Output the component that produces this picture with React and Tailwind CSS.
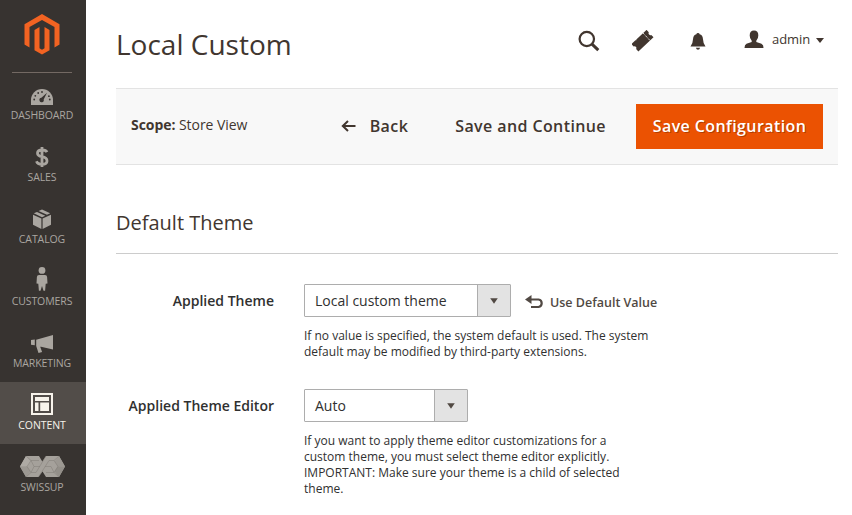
const icons = {
  dashboard: (
    <svg width="22" height="16" viewBox="0 0 22 16" fill="#aaa6a0">
      <path d="M0 16V11a11 11 0 0 1 22 0v5z" />
      <g fill="#373330">
        <circle cx="3.2" cy="10.5" r=".9" />
        <circle cx="4.3" cy="6.8" r=".9" />
        <circle cx="7.2" cy="4" r=".9" />
        <circle cx="11" cy="3" r=".9" />
        <circle cx="18.8" cy="10.5" r=".9" />
        <circle cx="17.9" cy="7.2" r=".9" />
        <path d="M16 3.8L12.7 10.4a2.2 2.2 0 1 1-2.3-1.6z" />
      </g>
    </svg>
  ),
  catalog: (
    <svg width="18" height="20" viewBox="0 0 18 20" fill="#aaa6a0">
      <path d="M0 5.8l8.4 3.7V20L0 15.8zM18 5.8l-8.4 3.7V20l8.4-4.2zM.8 4.3L4 2.9l8.3 3.8L9 8.2zM5.6 2.1L9 .5l8.2 3.8-3.2 1.5z" />
    </svg>
  ),
  customers: (
    <svg width="12" height="24" viewBox="0 0 12 24" fill="#aaa6a0">
      <circle cx="6" cy="3.4" r="3.4" />
      <path d="M3 8h6q2 0 2.1 2l.4 6.500-1.800.3-.6 7H7.500L6 19l-1.500 4.800H2.900l-.6-7-1.800-.3L.9 10Q1 8 3 8z" />
    </svg>
  ),
  marketing: (
    <svg width="22" height="18" viewBox="0 0 22 18" fill="#aaa6a0">
      <path d="M22 0v14.500L10 11.800H9.200l1.900 5.200-3.600 1L5.200 11V4.800zM0 5l3.800-.5v5.800L0 9.800z" />
    </svg>
  ),
  content: (
    <svg width="22" height="22" viewBox="0 0 22 22" fill="#f7f3eb">
      <path fillRule="evenodd" d="M0 0h22v22H0zM2 2v18h18V2z" />
      <path d="M4 4h14v4H4zM4 9.500h3.500V18H4zM9.200 9.500H18V18H9.200z" />
    </svg>
  ),
  swissup: (
    <svg width="45" height="21" viewBox="0 0 45 21">
      <path d="M6 0h13l3.300 5.500L26 0h13l6 10.500L39 21H26l-3.500-5.500L18.500 21H6L0 10.500z" fill="#a5a19b" />
      <path d="M6 0l4.500 5.500L7.500 10.500H0z" fill="#aeaaa4" />
      <path d="M7.500 10.500l3 5L6 21l-6-10.500z" fill="#9c9892" />
      <path d="M39 0l-4.500 5.500 3 5H45z" fill="#9c9892" />
      <path d="M34.500 15.500l3-5H45L39 21z" fill="#938f89" />
      <path d="M6 0l5 4.500h8M6 21l5-4.500h5M11 4.500l-4 6 4 6M14 10.500h6M14 10.500l-3-6M14 10.500l-3 6M39 0l-5 4.500h-5M39 21l-5-4.500h-8M34 4.500l4 6-4 6M31 10.500h-6M31 10.500l3 6M26 0L16 16.500M29 4.500L18.500 21" fill="none" stroke="#817d77" strokeWidth=".5" />
    </svg>
  ),
};

function MenuItem({ icon, label, active }) {
  return (
    <div className={`flex h-[62px] flex-col items-center pr-[2px] ${active ? "bg-[#524d49] text-[#f7f3eb]" : "text-[#aaa6a0]"}`}>
      <div className="flex h-[36px] items-end justify-center">{icon}</div>
      <div className="whitespace-nowrap text-[10.5px] leading-[15px] tracking-[-0.1px]">{label}</div>
    </div>
  );
}

function Select({ value, className }) {
  return (
    <div className={`flex h-[33px] rounded-[1px] border border-[#adadad] bg-white text-[14px] text-[#303030] ${className}`}>
      <div className="flex-1 whitespace-nowrap pl-[10px] leading-[31px]">{value}</div>
      <div className="flex w-[33px] items-center justify-center border-l border-[#adadad] bg-[#e3e3e3]">
        <svg width="8" height="6" viewBox="0 0 8 6"><path d="M.2.300h7.600L4 5.800z" fill="#514943" /></svg>
      </div>
    </div>
  );
}

export default function App() {
  return (
    <div className="flex h-[515px] w-[852px] overflow-hidden bg-white font-['Open_Sans',sans-serif] text-[#41362f]">
      <nav className="w-[86px] shrink-0 bg-[#373330]">
        <div className="mr-[14px] ml-[12px] flex h-[73px] justify-center border-b border-[#736963] pt-[14px]">
          <svg width="36" height="41" viewBox="0 0 36 41" fill="#f26322">
            <path d="M18 0l17.500 10.200v20.300l-5 2.900V13.100L18 5.900 5.500 13.100v20.300l-5-2.900V10.200z" />
            <path d="M15.500 13v21.300l2.500 1.500 2.500-1.500V13l5 2.900v20.400L18 40.600l-7.500-4.300V15.900z" />
          </svg>
        </div>
        <div className="-mt-px">
          <MenuItem icon={<span className="mb-[3px] flex">{icons.dashboard}</span>} label="DASHBOARD" />
          <MenuItem icon={<svg width="14" height="22" viewBox="0 0 14 22" className="mb-[2px]"><path d="M12 6.200Q11 4 7 4 2.500 4 2.500 7t4.500 3.700q5 .8 5 4.200 0 3.300-5 3.300-4.500 0-5.500-3M7 1v20" fill="none" stroke="#aaa6a0" strokeWidth="2.800" /></svg>} label="SALES" />
          <MenuItem icon={<span className="mb-[3px] flex">{icons.catalog}</span>} label="CATALOG" />
          <MenuItem icon={<span className="mb-[3px] flex">{icons.customers}</span>} label="CUSTOMERS" />
          <MenuItem icon={<span className="mb-[3px] flex">{icons.marketing}</span>} label="MARKETING" />
          <MenuItem icon={<span className="mb-[3px] flex">{icons.content}</span>} label="CONTENT" active />
          <MenuItem icon={<span className="mb-[3px] flex">{icons.swissup}</span>} label="SWISSUP" />
        </div>
      </nav>

      <main className="ml-[30px] w-[722px]">
        <header className="flex h-[88px] justify-between">
          <h1 className="pt-[24px] text-[28px] leading-[40px]">Local Custom</h1>
          <div className="flex pt-[30px] pr-[14px]">
            <svg width="22" height="22" viewBox="0 0 22 22" fill="none" stroke="#41362f">
              <circle cx="8.800" cy="9" r="7.200" strokeWidth="2.200" />
              <path d="M14 14.200l6.300 6" strokeWidth="3" />
            </svg>
            <svg width="22" height="22" viewBox="0 0 22 22" className="ml-[32px]" fill="#41362f">
              <g transform="rotate(-43 10.500 10.500)">
                <path d="M0 5.500h5.500l.6.700.6-.7h14v3.300a1.900 1.900 0 0 0 0 3.600v3.300H0v-3.300a1.900 1.900 0 0 0 0-3.600z" />
                <path d="M16 5.500v10.500" stroke="#fff" strokeWidth=".8" strokeDasharray="1.300 .7" />
              </g>
            </svg>
            <svg width="16" height="18" viewBox="0 0 16 18" className="mt-[2px] ml-[36px]" fill="#41362f">
              <path d="M8 1q1.500 0 1.600 1.300Q12.700 3 13 7.200q.2 4.800 2.500 7.300H.5Q2.800 12 3 7.200 3.300 3 6.400 2.300 6.500 1 8 1zM5.900 15.800h4.200q-.5 2-2.100 2t-2.100-2z" />
            </svg>
            <svg width="20" height="18" viewBox="0 0 20 18" className="ml-[38px]" fill="#41362f">
              <path d="M10 .500q4.400 0 4.300 5 0 3.400-2 5.200v1.400l5.200 1.700q2 .7 2 4.100H.500q0-3.400 2-4.100l5.200-1.700v-1.400q-2-1.800-2-5.200 0-5 4.300-5z" />
            </svg>
            <span className="ml-[8px] text-[13px] leading-[19px] tracking-[-0.1px]">admin</span>
            <svg width="8" height="5" viewBox="0 0 8 5" className="mt-[8px] ml-[6px]" fill="#41362f"><path d="M0 0h8L4 5z" /></svg>
          </div>
        </header>

        <section className="flex h-[77px] items-center justify-between border-y border-[#e3e3e3] bg-[#f8f8f8] pr-[15px] pl-[15px]">
          <div className="pb-[3px] text-[14px] leading-[20px] tracking-[-0.05px]"><b className="font-bold">Scope:</b> Store View</div>
          <div className="flex items-center text-[16px] font-semibold tracking-[0.4px]">
            <svg width="16" height="12" viewBox="0 0 16 12" fill="none" stroke="#41362f" strokeWidth="2" className="mb-px"><path d="M14.500 6H2M7 1L1.800 6 7 11" /></svg>
            <span className="ml-[13px] pb-[2px]">Back</span>
            <span className="ml-[47px] pb-[2px]">Save and Continue</span>
            <button className="ml-[30px] h-[45px] w-[187px] bg-[#eb5202] pb-[2px] text-white [text-shadow:1px_1px_0_rgba(0,0,0,.25)]">Save Configuration</button>
          </div>
        </section>

        <h2 className="mt-[44px] h-[45px] border-b border-[#cccccc] text-[20px] leading-[28px]">Default Theme</h2>

        <div className="mt-[30px] flex h-[105px]">
          <div className="w-[158px] text-right text-[14px] leading-[33px] font-semibold text-[#303030]">Applied Theme</div>
          <div className="ml-[30px]">
            <div className="flex">
              <Select value="Local custom theme" className="w-[207px]" />
              <div className="ml-[14px] flex h-[33px] items-center pt-[3px] text-[12.5px] font-semibold text-[#514943]">
                <svg width="18" height="14" viewBox="0 0 18 14" fill="none" stroke="#514943" strokeWidth="2.200"><path d="M3 4.500h10.500a3.800 3.800 0 0 1 0 7.500H6" /><path d="M6.500 0v9L0 4.500z" fill="#514943" stroke="none" /></svg>
                <span className="ml-[7px] pt-[2px]">Use Default Value</span>
              </div>
            </div>
            <p className="mt-[11px] text-[12px] leading-[16px] whitespace-nowrap text-[#303030]">If no value is specified, the system default is used. The system<br />default may be modified by third-party extensions.</p>
          </div>
        </div>
        <div className="flex">
          <div className="w-[158px] text-right text-[14px] leading-[33px] font-semibold text-[#303030]">Applied Theme Editor</div>
          <div className="ml-[30px]">
            <Select value="Auto" className="w-[164px]" />
            <p className="mt-[11px] text-[12px] leading-[16px] whitespace-nowrap text-[#303030]">If you want to apply theme editor customizations for a<br />custom theme, you must select theme editor explicitly.<br />IMPORTANT: Make sure your theme is a child of selected<br />theme.</p>
          </div>
        </div>
      </main>
    </div>
  );
}
